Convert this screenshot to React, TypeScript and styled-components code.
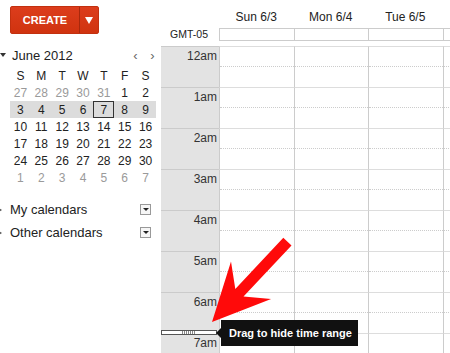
import React from 'react';
import styled, { createGlobalStyle } from 'styled-components';

const Global = createGlobalStyle`
  html, body {
    margin: 0;
    padding: 0;
    background: #fff;
    overflow: hidden;
  }
  body {
    font-family: 'Liberation Sans', Arial, sans-serif;
    color: #222;
  }
`;

const Page = styled.div`
  position: relative;
  width: 450px;
  height: 353px;
  overflow: hidden;
  display: flex;
`;

/* ---------- sidebar ---------- */

const Sidebar = styled.div`
  flex: 0 0 161px;
  padding-top: 6px;
  box-sizing: border-box;
`;

const CreateButton = styled.div`
  margin-left: 10px;
  width: 89px;
  height: 28px;
  display: flex;
  border-radius: 2px;
  background: linear-gradient(#dc3d1c, #d0330f);
  border: 1px solid #c2300f;
  box-sizing: border-box;
  color: #fff;
`;

const CreateLabel = styled.div`
  flex: 0 0 68px;
  display: flex;
  align-items: center;
  justify-content: center;
  font-size: 11px;
  font-weight: bold;
  border-right: 1px solid #a8280c;
`;

const CreateMenu = styled.div`
  flex: 1;
  display: flex;
  align-items: center;
  justify-content: center;
  &::before {
    content: '';
    border-left: 4px solid transparent;
    border-right: 4px solid transparent;
    border-top: 7px solid #fff;
  }
`;

const MonthHeader = styled.div`
  margin-top: 11px;
  height: 20px;
  display: flex;
  align-items: center;
  font-size: 13px;
  padding-left: 12px;
  position: relative;
  &::before {
    content: '';
    position: absolute;
    left: 0;
    top: 8px;
    border-left: 3px solid transparent;
    border-right: 3px solid transparent;
    border-top: 4px solid #333;
  }
`;

const MonthTitle = styled.span`
  flex: 1;
`;

const NavArrow = styled.span`
  width: 17px;
  text-align: center;
  font-size: 13px;
  color: #666;
`;

const MonthGrid = styled.div`
  margin: 2px 0 0 10px;
  width: 146px;
  display: grid;
  grid-template-columns: repeat(7, 1fr);
  grid-auto-rows: 17px;
`;

const Cell = styled.div<{ $muted?: boolean; $week?: boolean; $today?: boolean }>`
  display: flex;
  align-items: center;
  justify-content: center;
  font-size: 12px;
  color: ${p => (p.$muted ? '#9a9a9a' : '#222')};
  background: ${p => (p.$week ? '#dcdcdc' : 'transparent')};
  box-shadow: ${p => (p.$today ? 'inset 0 0 0 1px #333' : 'none')};
`;

const CalendarList = styled.div`
  margin-top: 12px;
`;

const CalendarRow = styled.div`
  height: 23px;
  display: flex;
  align-items: center;
  padding: 0 10px 0 10px;
  font-size: 13px;
  position: relative;
  &::before {
    content: '';
    position: absolute;
    left: -1px;
    top: 10px;
    border-top: 2px solid transparent;
    border-bottom: 2px solid transparent;
    border-left: 3px solid #555;
  }
`;

const CalendarName = styled.span`
  flex: 1;
`;

const MenuBox = styled.span`
  width: 11px;
  height: 11px;
  box-sizing: border-box;
  border: 1px solid #999;
  background: #f6f6f6;
  display: flex;
  align-items: center;
  justify-content: center;
  &::before {
    content: '';
    border-left: 3px solid transparent;
    border-right: 3px solid transparent;
    border-top: 3px solid #222;
  }
`;

/* ---------- week view ---------- */

const Main = styled.div`
  flex: 1;
  display: flex;
  flex-direction: column;
  min-width: 0;
  overflow: hidden;
`;

const ColumnsRow = styled.div`
  display: grid;
  grid-template-columns: 58px repeat(4, 74.5px);
`;

const DayName = styled.div`
  height: 28px;
  padding-top: 10px;
  box-sizing: border-box;
  text-align: center;
  font-size: 12px;
  color: #222;
  overflow: hidden;
`;

const AllDayRow = styled(ColumnsRow)`
  height: 14px;
`;

const Zone = styled.div`
  font-size: 10.5px;
  text-align: right;
  padding-right: 11px;
  line-height: 13px;
  color: #222;
`;

const AllDayCell = styled.div`
  border: 1px solid #ccc;
  border-right: none;
`;

const TimeGrid = styled.div`
  position: relative;
  margin-top: 5px;
`;

const HourRow = styled(ColumnsRow)`
  height: 41px;
`;

const HourLabel = styled.div`
  background: #e3e3e3;
  border-top: 1px solid #cbcbcb;
  text-align: right;
  padding: 2px 2px 0 0;
  font-size: 12px;
  line-height: 14px;
  color: #333;
`;

const Slot = styled.div`
  border-top: 1px solid #ddd;
  border-left: 1px solid #ccc;
  position: relative;
  &::after {
    content: '';
    position: absolute;
    left: 0;
    right: 0;
    top: 19px;
    border-top: 1px dotted #ccc;
  }
`;

const Handle = styled.div`
  position: absolute;
  left: 0;
  top: 284px;
  width: 56px;
  height: 5px;
  box-sizing: border-box;
  border: 1px solid #555;
  background: #fff;
  display: flex;
  justify-content: center;
  &::before {
    content: '';
    width: 14px;
    height: 3px;
    background: repeating-linear-gradient(90deg, #888 0 1px, #fff 1px 2px);
  }
`;

const Tooltip = styled.div`
  position: absolute;
  left: 60px;
  top: 274px;
  width: 137px;
  height: 26px;
  background: #111;
  color: #fff;
  font-size: 11px;
  font-weight: bold;
  display: flex;
  align-items: center;
  padding-left: 8px;
  box-sizing: border-box;
  white-space: nowrap;
  &::before {
    content: '';
    position: absolute;
    left: -5px;
    top: 8px;
    border-top: 5px solid transparent;
    border-bottom: 5px solid transparent;
    border-right: 5px solid #111;
  }
`;

const ArrowLayer = styled.svg`
  position: absolute;
  left: 0;
  top: 0;
  width: 450px;
  height: 353px;
  pointer-events: none;
`;

const weeks: [number, boolean][][] = [
  [[27, true], [28, true], [29, true], [30, true], [31, true], [1, false], [2, false]],
  [3, 4, 5, 6, 7, 8, 9].map(d => [d, false] as [number, boolean]),
  [10, 11, 12, 13, 14, 15, 16].map(d => [d, false] as [number, boolean]),
  [17, 18, 19, 20, 21, 22, 23].map(d => [d, false] as [number, boolean]),
  [24, 25, 26, 27, 28, 29, 30].map(d => [d, false] as [number, boolean]),
  [1, 2, 3, 4, 5, 6, 7].map(d => [d, true] as [number, boolean]),
];

// the fourth column runs off the right edge, its label is out of view
const days = ['Sun 6/3', 'Mon 6/4', 'Tue 6/5', ''];
const hours = ['12am', '1am', '2am', '3am', '4am', '5am', '6am', '7am'];

export default function App() {
  return (
    <Page>
      <Global />
      <Sidebar>
        <CreateButton>
          <CreateLabel>CREATE</CreateLabel>
          <CreateMenu />
        </CreateButton>

        <MonthHeader>
          <MonthTitle>June 2012</MonthTitle>
          <NavArrow>‹</NavArrow>
          <NavArrow>›</NavArrow>
        </MonthHeader>

        <MonthGrid>
          {['S', 'M', 'T', 'W', 'T', 'F', 'S'].map((d, i) => (
            <Cell key={'h' + i}>{d}</Cell>
          ))}
          {weeks.map((week, w) =>
            week.map(([d, muted], i) => (
              <Cell
                key={w + '-' + i}
                $muted={muted}
                $week={w === 1}
                $today={w === 1 && d === 7}
              >
                {d}
              </Cell>
            ))
          )}
        </MonthGrid>

        <CalendarList>
          <CalendarRow>
            <CalendarName>My calendars</CalendarName>
            <MenuBox />
          </CalendarRow>
          <CalendarRow>
            <CalendarName>Other calendars</CalendarName>
            <MenuBox />
          </CalendarRow>
        </CalendarList>
      </Sidebar>

      <Main>
        <ColumnsRow>
          <div />
          {days.map((d, i) => (
            <DayName key={i}>{d}</DayName>
          ))}
        </ColumnsRow>
        <AllDayRow>
          <Zone>GMT-05</Zone>
          {days.map((d, i) => (
            <AllDayCell key={i} />
          ))}
        </AllDayRow>

        <TimeGrid>
          {hours.map(h => (
            <HourRow key={h}>
              <HourLabel>{h}</HourLabel>
              {days.map((d, i) => (
                <Slot key={i} />
              ))}
            </HourRow>
          ))}
          <Handle />
          <Tooltip>Drag to hide time range</Tooltip>
        </TimeGrid>
      </Main>

      <ArrowLayer viewBox="0 0 450 353">
        <polygon
          points="212,322 231,261.5 235.3,289 283.3,237.8 291.5,245.4 243.5,296.6 271.1,299.1"
          fill="#ff0a0a"
        />
      </ArrowLayer>
    </Page>
  );
}
